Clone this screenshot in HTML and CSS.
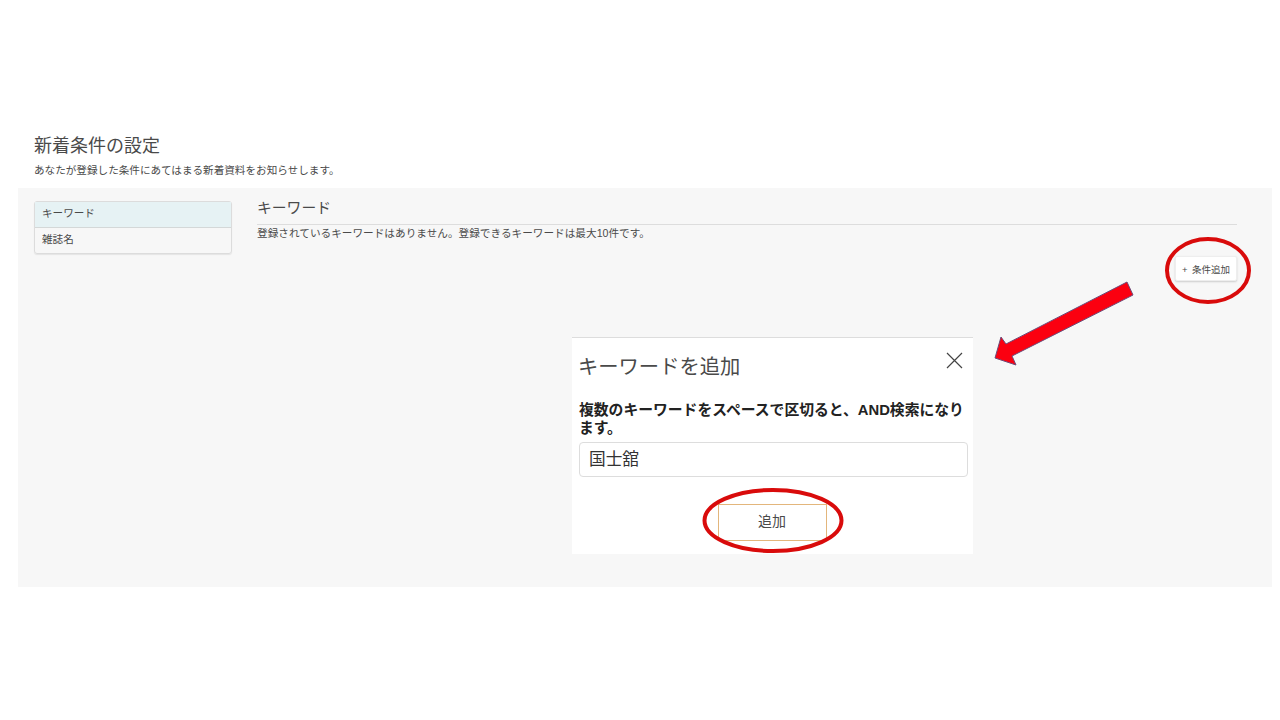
FILE: index.html
```html
<!DOCTYPE html>
<html lang="ja">
<head>
    <meta charset="UTF-8">
    <title>新着条件の設定</title>
    <link rel="stylesheet" href="styles.css">
</head>
<body>
    <div class="page-head">
        <h1>新着条件の設定</h1>
        <p>あなたが登録した条件にあてはまる新着資料をお知らせします。</p>
    </div>

    <div class="panel">
        <ul class="side-menu">
            <li class="active">キーワード</li>
            <li>雑誌名</li>
        </ul>
        <div class="content">
            <h2>キーワード</h2>
            <p>登録されているキーワードはありません。登録できるキーワードは最大10件です。</p>
            <div class="content-actions">
                <button class="add-button">+ 条件追加</button>
            </div>
        </div>
    </div>

    <!-- ダイアログ -->
    <div class="modal">
        <div class="modal-head">
            <h3>キーワードを追加</h3>
            <svg class="close-icon" width="17" height="17" viewBox="0 0 17 17">
                <path d="M1 1L16 16M16 1L1 16" stroke="#444" stroke-width="1.2" fill="none"/>
            </svg>
        </div>
        <label class="modal-label">複数のキーワードをスペースで区切ると、AND検索になります。</label>
        <div class="modal-input">国士舘</div>
        <div class="modal-actions">
            <button class="submit-button">追加</button>
        </div>
    </div>

    <!-- 赤い注釈 -->
    <svg class="annotations" width="1280" height="720" viewBox="0 0 1280 720">
        <ellipse cx="1208" cy="270.5" rx="41" ry="31.5" fill="none" stroke="#d90b0b" stroke-width="4"/>
        <ellipse cx="773" cy="520.5" rx="68.5" ry="30.5" fill="none" stroke="#d90b0b" stroke-width="4"/>
        <polygon points="1127,282 1133,295 1012,356 1016,365 995,358 1001,337 1006,344" fill="#fb0010" stroke="#6d4a78" stroke-width="1"/>
    </svg>
</body>
</html>
```

FILE: styles.css
```css
* {
    margin: 0;
    padding: 0;
    box-sizing: border-box;
}
body {
    font-family: "Liberation Sans", "Noto Sans CJK JP", sans-serif;
    background-color: #ffffff;
    color: #333333;
    width: 1280px;
    height: 720px;
    overflow: hidden;
    position: relative;
}
.page-head {
    padding: 135px 0 0 34px;
    height: 188px;
}
.page-head h1 {
    font-size: 18px;
    font-weight: normal;
    line-height: 23px;
    color: #4a4a4a;
}
.page-head p {
    margin-top: 4px;
    font-size: 10.6px;
    line-height: 16px;
    color: #4a4a4a;
}
.panel {
    display: flex;
    margin-left: 18px;
    width: 1254px;
    height: 399px;
    padding: 13px 35px 0 16px;
    background-color: #f7f7f7;
}
.side-menu {
    list-style: none;
    width: 198px;
    height: 53px;
    flex-shrink: 0;
    border: 1px solid #dcdcdc;
    border-radius: 3px;
    box-shadow: 0 1px 1px #e4e4e4;
    font-size: 10.6px;
    color: #4a4a4a;
}
.side-menu li {
    height: 26px;
    line-height: 23px;
    padding-left: 7px;
}
.side-menu li.active {
    background-color: #e6f2f4;
    border-bottom: 1px solid #d4d8d8;
}
.content {
    flex: 1;
    margin-left: 25px;
}
.content h2 {
    font-size: 14.8px;
    font-weight: normal;
    line-height: 14px;
    height: 24px;
    border-bottom: 1px solid #dddddd;
    color: #4a4a4a;
}
.content p {
    font-size: 10.65px;
    line-height: 17px;
    color: #4a4a4a;
}
.content-actions {
    display: flex;
    justify-content: flex-end;
    margin-top: 14px;
}
.add-button {
    width: 62px;
    height: 25px;
    font-family: inherit;
    font-size: 9.5px;
    word-spacing: 2px;
    color: #4a4a4a;
    background-color: #ffffff;
    border: 1px solid #eeeeee;
    border-radius: 2px;
    box-shadow: 0 1px 2px #cccccc;
}
.modal {
    position: absolute;
    left: 572px;
    top: 337px;
    width: 401px;
    height: 217px;
    padding: 0 5px 0 7px;
    background-color: #ffffff;
    border-top: 1px solid #dddddd;
}
.modal-head {
    display: flex;
    justify-content: space-between;
    height: 63px;
    padding-top: 14px;
}
.modal-head h3 {
    margin-left: -1px;
    font-size: 20.3px;
    font-weight: normal;
    line-height: 30px;
    color: #4a4a4a;
}
.close-icon {
    margin: 0 5px 0 0;
}
.modal-label {
    display: block;
    font-size: 14.8px;
    font-weight: bold;
    line-height: 18px;
    color: #222222;
}
.modal-input {
    margin-top: 5px;
    height: 35px;
    padding-left: 9px;
    font-size: 16.7px;
    line-height: 33px;
    color: #333333;
    border: 1px solid #dddddd;
    border-radius: 4px;
}
.modal-actions {
    display: flex;
    justify-content: center;
    margin-top: 27px;
    padding-right: 3px;
}
.submit-button {
    width: 109px;
    height: 37px;
    padding-bottom: 5px;
    font-family: inherit;
    font-size: 14px;
    color: #4a4a4a;
    background-color: #ffffff;
    border: 1.5px solid #e3b67c;
}
.annotations {
    position: absolute;
    left: 0;
    top: 0;
}
```
